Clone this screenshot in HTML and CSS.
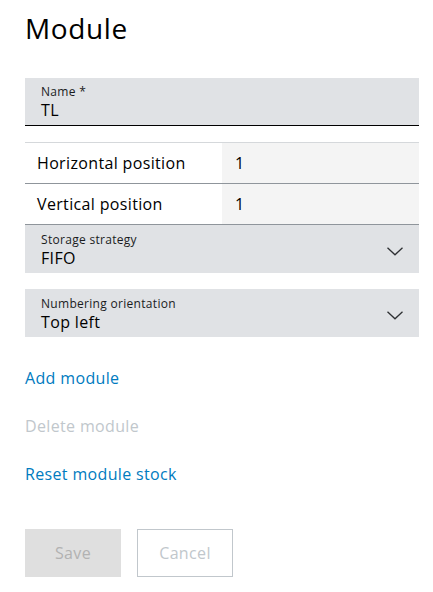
FILE: index.html
```html
<!DOCTYPE html>
<html lang="en">
<head>
<meta charset="utf-8">
<title>Module</title>
<link rel="stylesheet" href="styles.css">
</head>
<body>
<main class="page">
  <h1 class="title">Module</h1>

  <div class="field field--text">
    <span class="field__label">Name *</span>
    <span class="field__value">TL</span>
  </div>

  <div class="table">
    <div class="row">
      <div class="cell cell--label">Horizontal position</div>
      <div class="cell cell--value">1</div>
    </div>
    <div class="row">
      <div class="cell cell--label">Vertical position</div>
      <div class="cell cell--value">1</div>
    </div>
  </div>

  <div class="field field--select">
    <div class="field__text">
      <span class="field__label">Storage strategy</span>
      <span class="field__value">FIFO</span>
    </div>
    <svg class="chevron" width="16" height="9" viewBox="0 0 16 9"><path d="M0.5 0.8 L8 7.8 L15.5 0.8" fill="none" stroke="#2e3033" stroke-width="1.3"/></svg>
  </div>

  <div class="field field--select field--spaced">
    <div class="field__text">
      <span class="field__label">Numbering orientation</span>
      <span class="field__value">Top left</span>
    </div>
    <svg class="chevron" width="16" height="9" viewBox="0 0 16 9"><path d="M0.5 0.8 L8 7.8 L15.5 0.8" fill="none" stroke="#2e3033" stroke-width="1.3"/></svg>
  </div>

  <nav class="actions">
    <a class="link" href="#">Add module</a>
    <span class="link link--disabled">Delete module</span>
    <a class="link" href="#">Reset module stock</a>
  </nav>

  <div class="buttons">
    <button class="btn btn--primary" disabled>Save</button>
    <button class="btn btn--secondary" disabled>Cancel</button>
  </div>
</main>
</body>
</html>
```

FILE: styles.css
```css
* { box-sizing: border-box; }

html, body {
  margin: 0;
  padding: 0;
  background: #ffffff;
}

body {
  font-family: "Open Sans", "Noto Sans", sans-serif;
  color: #000000;
  letter-spacing: 0.35px;
}

.page {
  padding: 0 14px 0 25px;
  display: flex;
  flex-direction: column;
}

.title {
  margin: 0;
  padding-top: 9px;
  height: 78px;
  font-size: 28px;
  font-weight: 400;
  line-height: 38px;
  letter-spacing: 0.6px;
}

.field {
  background: #e0e2e5;
  height: 48px;
  display: flex;
  padding: 0 16px;
}

.field--text {
  flex-direction: column;
  justify-content: center;
  border-bottom: 1px solid #000000;
  padding-top: 1px;
}

.field--select {
  align-items: center;
  justify-content: space-between;
}

.field--spaced {
  margin-top: 16px;
}

.field__text {
  display: flex;
  flex-direction: column;
  padding-top: 1px;
}

.field__label {
  font-size: 12px;
  line-height: 16px;
  color: #1a1c1d;
  letter-spacing: 0.3px;
}

.field__value {
  font-size: 16px;
  line-height: 20px;
  color: #000000;
}

.chevron {
  display: block;
  margin-top: 4px;
}

.table {
  margin-top: 16px;
  border-top: 1px solid #d5d8db;
}

.row {
  display: grid;
  grid-template-columns: 197px 1fr;
  height: 41px;
  border-bottom: 1px solid #8f959b;
}

.cell {
  display: flex;
  align-items: center;
  font-size: 16px;
  color: #000000;
}

.cell--label {
  padding-left: 12px;
  background: #ffffff;
}

.cell--value {
  padding-left: 13px;
  background: #f4f4f4;
}

.actions {
  margin-top: 17px;
  display: flex;
  flex-direction: column;
}

.link {
  height: 48px;
  display: flex;
  align-items: center;
  font-size: 16px;
  color: #007bc0;
  text-decoration: none;
  align-self: flex-start;
}

.link--disabled {
  color: #c1c7cc;
}

.buttons {
  margin-top: 31px;
  display: flex;
  gap: 16px;
}

.btn {
  width: 96px;
  height: 48px;
  font-family: inherit;
  font-size: 16px;
  letter-spacing: 0.35px;
  padding: 0;
  border-radius: 0;
}

.btn--primary {
  background: #dfdfdf;
  border: none;
  color: #b2b2b2;
}

.btn--secondary {
  background: #ffffff;
  border: 1px solid #c1c7cc;
  color: #c1c7cc;
}
```
